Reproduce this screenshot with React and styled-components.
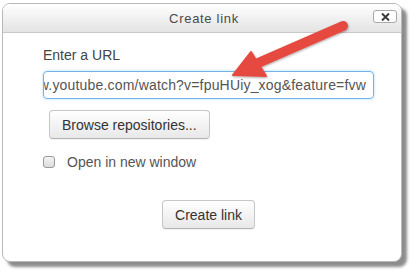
import React from 'react';
import styled, { createGlobalStyle } from 'styled-components';

const GlobalStyle = createGlobalStyle`
    html, body {
        margin: 0;
        padding: 0;
        background: #ffffff;
        font-family: "Liberation Sans", Arial, sans-serif;
    }
`;

const Page = styled.div`
    position: relative;
    width: 418px;
    height: 278px;
    padding: 3px 0 0 2px;
    box-sizing: border-box;
    overflow: hidden;
`;

const Dialog = styled.div`
    width: 400px;
    box-sizing: border-box;
    background: #ffffff;
    border: 1px solid #b9b9b9;
    border-radius: 8px;
    box-shadow: 5px 5px 3px rgba(0, 0, 0, 0.45);
    overflow: hidden;
`;

const Header = styled.div`
    height: 28px;
    display: grid;
    grid-template-columns: 1fr auto 1fr;
    align-items: center;
    padding: 0 4px 0 8px;
    background: linear-gradient(#ffffff, #e3e3e3);
    border-bottom: 1px solid #c8c8c8;
`;

const Title = styled.div`
    grid-column: 2;
    font-size: 13px;
    letter-spacing: 0.7px;
    color: #4a4a4a;
    padding-top: 1px;
`;

const CloseButton = styled.div`
    justify-self: end;
    width: 24px;
    height: 13px;
    box-sizing: border-box;
    border: 1px solid #a8a8a8;
    border-radius: 3px;
    background: #ffffff;
    display: flex;
    align-items: center;
    justify-content: center;
    margin-top: -3px;
`;

const Body = styled.div`
    padding: 12px 27px 32px 40px;
    display: flex;
    flex-direction: column;
`;

const Label = styled.div`
    font-size: 14px;
    line-height: 20px;
    color: #444;
    margin-bottom: 6px;
`;

const UrlField = styled.div`
    height: 28px;
    box-sizing: border-box;
    border: 1px solid #74b3ea;
    border-radius: 4px;
    box-shadow: 0 0 3px rgba(82, 168, 236, 0.45);
    display: flex;
    align-items: center;
    justify-content: flex-end;
    padding: 0 7px;
    overflow: hidden;
    white-space: nowrap;
    font-size: 14px;
    letter-spacing: 0.18px;
    color: #555;
`;

const Button = styled.div`
    align-self: ${({ center }) => (center ? 'center' : 'flex-start')};
    margin: ${({ m }) => m};
    height: 29px;
    box-sizing: border-box;
    padding: 0 12px;
    display: flex;
    align-items: center;
    font-size: 14px;
    color: #333;
    border: 1px solid #c6c6c6;
    border-bottom-color: #b4b4b4;
    border-radius: 4px;
    background: linear-gradient(#ffffff, #e8e8e8);
    box-shadow: 0 1px 1px rgba(0, 0, 0, 0.06);
`;

const CheckRow = styled.div`
    display: flex;
    align-items: center;
    gap: 12px;
    height: 20px;
    margin-top: 13px;
    font-size: 14px;
    color: #555;
`;

const Checkbox = styled.div`
    width: 12px;
    height: 12px;
    box-sizing: border-box;
    border: 1px solid #9a9a9a;
    border-radius: 3px;
    background: linear-gradient(#f4f4f4, #dcdcdc);
`;

const ArrowLayer = styled.svg`
    position: absolute;
    left: 0;
    top: 0;
    pointer-events: none;
`;

function Arrow() {
    return (
        <ArrowLayer width="418" height="278" viewBox="0 0 418 278">
            <defs>
                <filter id="sh" x="-20%" y="-20%" width="140%" height="140%">
                    <feDropShadow dx="0.5" dy="1" stdDeviation="0.8" floodColor="#000" floodOpacity="0.35" />
                </filter>
            </defs>
            <g filter="url(#sh)" fill="#e5483f" stroke="#e5483f">
                <line x1="343" y1="26" x2="258" y2="63" strokeWidth="10" strokeLinecap="round" />
                <polygon points="233,75 251,52 266,76" strokeWidth="2" strokeLinejoin="round" />
            </g>
        </ArrowLayer>
    );
}

export default function App() {
    return (
        <>
            <GlobalStyle />
            <Page>
                <Dialog>
                    <Header>
                        <Title>Create link</Title>
                        <CloseButton>
                            <svg width="9" height="8" viewBox="0 0 9 8">
                                <path d="M1 0.5 L8 7.5 M8 0.5 L1 7.5" stroke="#3a3a3a" strokeWidth="2" />
                            </svg>
                        </CloseButton>
                    </Header>
                    <Body>
                        <Label>Enter a URL</Label>
                        <UrlField>www.youtube.com/watch?v=fpuHUiy_xog&amp;feature=fvw</UrlField>
                        <Button m="11px 0 0 6px">Browse repositories...</Button>
                        <CheckRow>
                            <Checkbox />
                            Open in new window
                        </CheckRow>
                        <Button center m="28px 0 0 0">Create link</Button>
                    </Body>
                </Dialog>
                <Arrow />
            </Page>
        </>
    );
}
